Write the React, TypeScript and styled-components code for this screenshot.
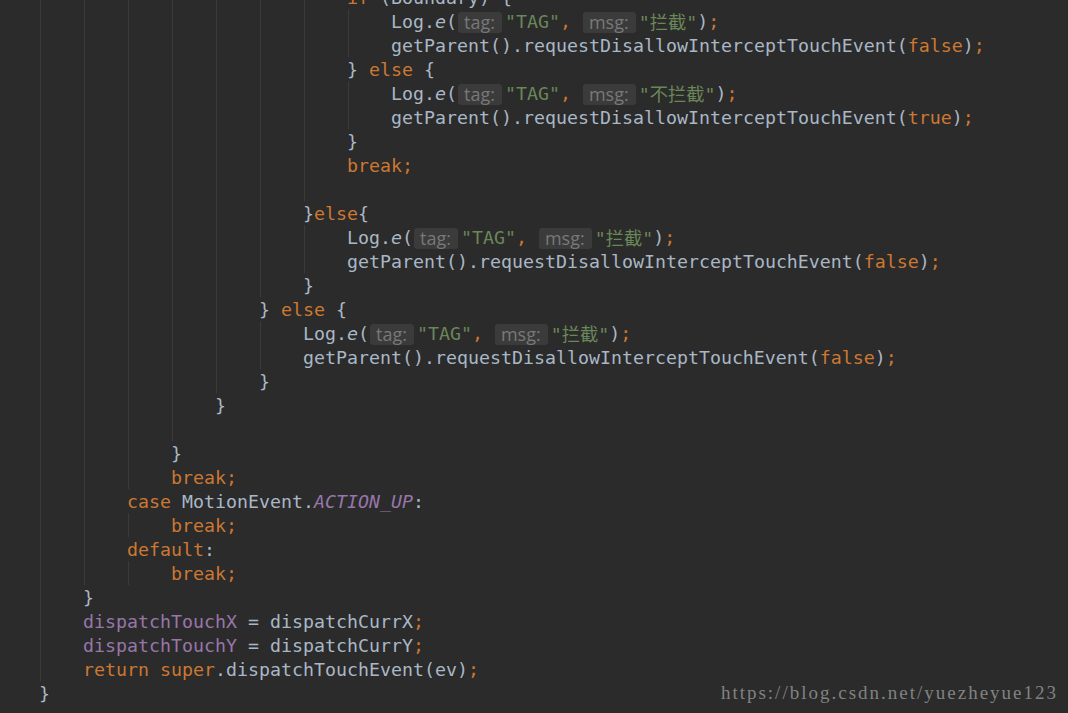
import React from 'react';
import styled, { createGlobalStyle } from 'styled-components';

const GlobalStyle = createGlobalStyle`
  html, body {
    margin: 0;
    padding: 0;
    background: #2b2b2b;
    overflow: hidden;
  }
`;

type Kind = 'plain' | 'kw' | 'str' | 'field' | 'static' | 'const' | 'punc' | 'hint';
type Tok = [Kind, string];

interface Line {
  level: number;
  guides?: number;
  tokens: Tok[];
}

const colors: Record<Kind, string> = {
  plain: '#a9b7c6',
  kw: '#cc7832',
  str: '#6a8759',
  field: '#9876aa',
  static: '#a9b7c6',
  const: '#9876aa',
  punc: '#cc7832',
  hint: '#787878',
};

const EditorFrame = styled.div`
  position: relative;
  width: 1068px;
  height: 713px;
  overflow: hidden;
  background: #2b2b2b;
`;

const Code = styled.div`
  display: flex;
  flex-direction: column;
  margin-top: -15px;
  padding-left: 39px;
  font-family: 'DejaVu Sans Mono', 'Noto Sans CJK SC', monospace;
  font-size: 18.27px;
  white-space: pre;
`;

const Row = styled.div`
  display: flex;
  align-items: center;
  height: 24px;
`;

const Indent = styled.span<{ $guide: boolean }>`
  flex: none;
  align-self: stretch;
  width: 44px;
  background: ${p =>
    p.$guide
      ? 'linear-gradient(to right, transparent 1px, #3a3a3a 1px, #3a3a3a 2px, transparent 2px)'
      : 'none'};
`;

const Token = styled.span<{ $kind: Kind }>`
  color: ${p => colors[p.$kind]};
  font-style: ${p => (p.$kind === 'static' || p.$kind === 'const' ? 'italic' : 'normal')};
`;

const Hint = styled.span`
  display: inline-flex;
  align-items: center;
  height: 20px;
  margin: 2px 3px 0 1px;
  padding: 0 7px 1px 6px;
  border-radius: 3px;
  background: #3b3b3b;
  color: #787878;
  font-family: 'Open Sans', 'Noto Sans', sans-serif;
  font-size: 18px;
`;

const Watermark = styled.div`
  position: absolute;
  right: 10px;
  bottom: 9px;
  color: #828282;
  font-family: 'Liberation Serif', 'DejaVu Serif', serif;
  font-size: 19px;
  letter-spacing: 2px;
`;

const logLine = (level: number, msg: string): Line => ({
  level,
  tokens: [
    ['plain', 'Log.'],
    ['static', 'e'],
    ['plain', '('],
    ['hint', 'tag:'],
    ['str', '"TAG"'],
    ['punc', ','],
    ['plain', ' '],
    ['hint', 'msg:'],
    ['str', `"${msg}"`],
    ['plain', ')'],
    ['punc', ';'],
  ],
});

const parentLine = (level: number, value: string): Line => ({
  level,
  tokens: [
    ['plain', 'getParent().requestDisallowInterceptTouchEvent('],
    ['kw', value],
    ['plain', ')'],
    ['punc', ';'],
  ],
});

const close = (level: number): Line => ({ level, tokens: [['plain', '}']] });
const elseLine = (level: number): Line => ({
  level,
  tokens: [['plain', '} '], ['kw', 'else'], ['plain', ' {']],
});
const breakLine = (level: number): Line => ({
  level,
  tokens: [['kw', 'break'], ['punc', ';']],
});
const blank = (guides: number): Line => ({ level: guides, guides, tokens: [] });

const lines: Line[] = [
  { level: 7, tokens: [['kw', 'if'], ['plain', ' (Boundary) {']] },
  logLine(8, '拦截'),
  parentLine(8, 'false'),
  elseLine(7),
  logLine(8, '不拦截'),
  parentLine(8, 'true'),
  close(7),
  breakLine(7),
  blank(7),
  { level: 6, tokens: [['plain', '}'], ['kw', 'else'], ['plain', '{']] },
  logLine(7, '拦截'),
  parentLine(7, 'false'),
  close(6),
  elseLine(5),
  logLine(6, '拦截'),
  parentLine(6, 'false'),
  close(5),
  close(4),
  blank(4),
  close(3),
  breakLine(3),
  {
    level: 2,
    tokens: [['kw', 'case'], ['plain', ' MotionEvent.'], ['const', 'ACTION_UP'], ['plain', ':']],
  },
  breakLine(3),
  { level: 2, tokens: [['kw', 'default'], ['plain', ':']] },
  breakLine(3),
  close(1),
  { level: 1, tokens: [['field', 'dispatchTouchX'], ['plain', ' = dispatchCurrX'], ['punc', ';']] },
  { level: 1, tokens: [['field', 'dispatchTouchY'], ['plain', ' = dispatchCurrY'], ['punc', ';']] },
  {
    level: 1,
    tokens: [
      ['kw', 'return'],
      ['plain', ' '],
      ['kw', 'super'],
      ['plain', '.dispatchTouchEvent(ev)'],
      ['punc', ';'],
    ],
  },
  close(0),
];

const CodeLine: React.FC<{ line: Line }> = ({ line }) => {
  const guides = line.guides ?? line.level;
  return (
    <Row>
      {Array.from({ length: line.level }, (_, i) => (
        <Indent key={i} $guide={i < guides} />
      ))}
      {line.tokens.map(([kind, text], i) =>
        kind === 'hint' ? (
          <Hint key={i}>{text}</Hint>
        ) : (
          <Token key={i} $kind={kind}>
            {text}
          </Token>
        )
      )}
    </Row>
  );
};

export default function App() {
  return (
    <>
      <GlobalStyle />
      <EditorFrame>
        <Code>
          {lines.map((line, i) => (
            <CodeLine key={i} line={line} />
          ))}
        </Code>
        <Watermark>https://blog.csdn.net/yuezheyue123</Watermark>
      </EditorFrame>
    </>
  );
}
